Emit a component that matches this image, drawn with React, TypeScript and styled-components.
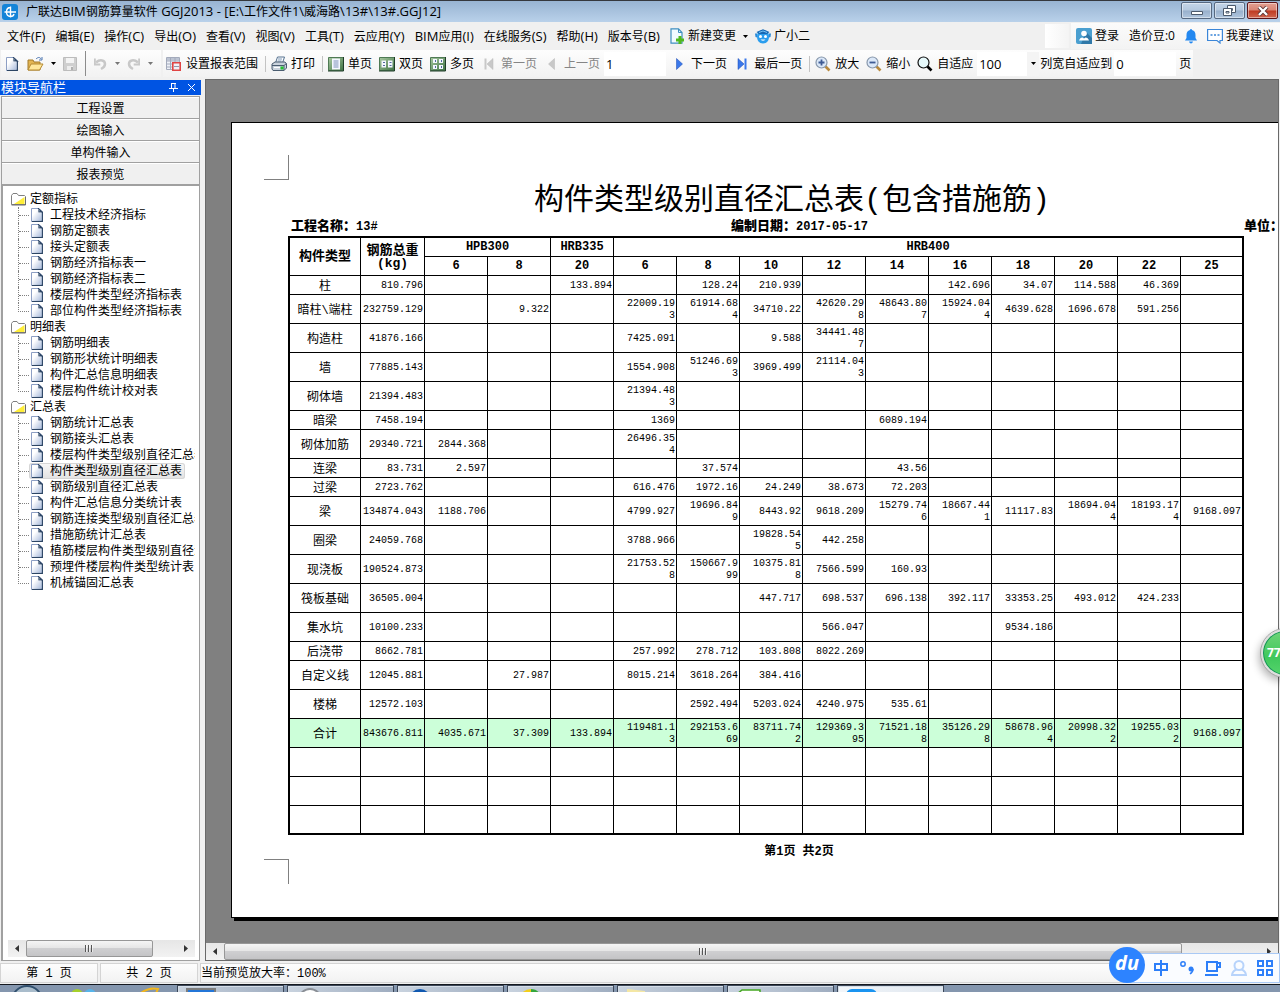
import React from "react";
import styled, { createGlobalStyle, css } from "styled-components";

const uiFont = `"Open Sans", "Noto Sans CJK SC", sans-serif`;
const monoFont = `"Liberation Mono", "Noto Sans CJK SC", monospace`;

const GlobalStyle = createGlobalStyle`
  *, *::before, *::after { box-sizing: border-box; }
  html, body { margin: 0; height: 100%; overflow: hidden; }
  body { font: 12px/16px ${uiFont}; color: #000; background: #f0f0f0; }
  button, input, select { font: inherit; color: inherit; margin: 0; padding: 0; border: 0; background: none; }
  svg { display: block; flex: none; }
`;

const Window = styled.div`
  position: relative;
  display: flex;
  flex-direction: column;
  height: 100vh;
  overflow: hidden;
  white-space: nowrap;
`;

/* Latin runs are set one size up from the Chinese text around them. */
const Latin = styled.span`
  font-size: 13px;
  white-space: pre;
`;
const Mixed = ({ text }: { text: string }) => (
  <span>
    {text.split(/([\x20-\x7e]+)/).map((part, i) => (i % 2 ? <Latin key={i}>{part}</Latin> : part))}
  </span>
);

/* ---------- title bar ---------- */

const TitleBar = styled.header`
  display: flex;
  align-items: center;
  height: 22px;
  padding: 0 2px;
  gap: 8px;
  border-top: 1px solid #35383d;
  background: linear-gradient(#98b4d2, #b9d1ea);
`;
const TitleText = styled.h1`
  flex: 1;
  margin: 0;
  font-size: 12px;
  line-height: 20px;
  font-weight: 400;
`;
const WindowButtons = styled.div`
  display: flex;
  gap: 2px;
  align-self: flex-start;
  padding-top: 1px;
`;
const WindowButton = styled.button<{ $close?: boolean }>`
  display: flex;
  align-items: center;
  justify-content: center;
  width: 31px;
  height: 17px;
  border: 1px solid ${(p) => (p.$close ? "#5c1418" : "#566880")};
  border-radius: 2px;
  box-shadow: inset 0 0 0 1px rgba(255, 255, 255, 0.45);
  background: ${(p) =>
    p.$close
      ? "linear-gradient(#e3a092 0, #d98473 48%, #bf3a22 52%, #cf6650)"
      : "linear-gradient(#c4d5e8 0, #b4c8de 48%, #98b0cc 52%, #b0c6de)"};
`;

/* ---------- menu ---------- */

const MenuBar = styled.nav`
  display: flex;
  align-items: center;
  height: 28px;
  padding-left: 2px;
  background: #f0f0f0;
`;
const MenuItem = styled.button`
  display: flex;
  align-items: center;
  gap: 3px;
  height: 24px;
  padding: 0 5px;
`;
const MenuArrow = styled.button`
  display: flex;
  padding: 0 2px;
`;
const MenuSpacer = styled.div`
  flex: 1;
`;
const EmptyBand = styled.div`
  width: 24px;
  height: 24px;
  margin-right: 2px;
  background: linear-gradient(90deg, #fff, #f4f4f4);
`;
const AccountBand = styled.div`
  display: flex;
  align-items: center;
  height: 26px;
  padding-right: 1px;
  background: linear-gradient(#fbfbfb, #f3f3f3);
`;

/* ---------- toolbar ---------- */

const ToolBar = styled.div`
  display: flex;
  align-items: center;
  height: 28px;
  gap: 2px;
  padding: 0 0 1px 1px;
`;
const ToolBand = styled.div<{ $end?: number }>`
  display: flex;
  align-items: center;
  height: 27px;
  padding-right: ${(p) => p.$end ?? 0}px;
  background: linear-gradient(#fdfdfd, #f2f2f2);
`;
const ToolButton = styled.button<{ $muted?: boolean; $split?: boolean }>`
  display: flex;
  align-items: center;
  gap: ${(p) => (p.$split ? 7 : 4)}px;
  height: 24px;
  padding: 0 4px 0 3px;
  color: ${(p) => (p.$muted ? "#858585" : "#000")};
`;
const ListButton = styled.button`
  display: flex;
  padding: 10px 4px;
`;
const Separator = styled.span<{ $tall?: boolean }>`
  width: 1px;
  height: ${(p) => (p.$tall ? 25 : 16)}px;
  margin: ${(p) => (p.$tall ? "0 5px 0 4px" : "0 2px 0 3px")};
  background: ${(p) => (p.$tall ? "#8c8c8c" : "#c3c3c3")};
`;
const Field = styled.input`
  width: 62px;
  height: 24px;
  margin-right: 2px;
  padding: 0 2px;
  font-size: 13px;
  background: #fff;
`;
const Combo = styled.span`
  display: grid;
  grid-template-columns: 50px 12px;
  align-items: center;
  height: 24px;
  background: linear-gradient(90deg, #fff 50px, #f4f4f4 50px);
  svg {
    grid-area: 1 / 2;
    justify-self: center;
    pointer-events: none;
  }
`;
const ComboSelect = styled.select`
  grid-area: 1 / 1 / 2 / 3;
  appearance: none;
  height: 24px;
  padding-left: 2px;
  font-size: 13px;
`;
const FieldLabel = styled.label`
  padding: 0 2px 0 1px;
`;

/* ---------- body ---------- */

const Body = styled.div`
  display: flex;
  flex: 1;
  min-height: 0;
  padding: 1px 0 2px;
`;
const Sidebar = styled.aside`
  display: flex;
  flex-direction: column;
  width: 201px;
  padding: 1px 0 0 0;
  margin-right: 4px;
`;
const SidebarHead = styled.div`
  display: flex;
  align-items: center;
  gap: 9px;
  height: 15px;
  padding: 0 5px 0 1px;
  background: #0054e3;
  color: #fff;
`;
const SidebarTitle = styled.h2`
  flex: 1;
  margin: 0;
  font-size: 13px;
  line-height: 15px;
  font-weight: 400;
`;
const IconButton = styled.button`
  display: flex;
`;
const SidebarFrame = styled.div`
  display: flex;
  flex-direction: column;
  flex: 1;
  min-height: 0;
  margin: 1px 1px 0;
  border: 1px solid #a0a0a0;
`;
const ModuleButton = styled.button`
  height: 22px;
  padding-top: 1px;
  line-height: 19px;
  border-top: 1px solid #fff;
  border-bottom: 1px solid #a0a0a0;
  background: #f0f0f0;
`;
const TreePanel = styled.div`
  display: flex;
  flex-direction: column;
  flex: 1;
  min-height: 0;
  padding: 5px 4px 3px 5px;
  border: 1px solid #a0a0a0;
  border-width: 1px 0 0 1px;
  background: #fff;
`;
const Tree = styled.ul`
  flex: 1;
  min-height: 0;
  margin: 0;
  padding: 0 0 0 3px;
  overflow: hidden;
  list-style: none;
`;
const FolderRow = styled.div`
  display: flex;
  align-items: center;
  gap: 4px;
  height: 16px;
`;
const Branch = styled.ul`
  margin: 0;
  padding: 0 0 0 7px;
  list-style: none;
`;
const Leaf = styled.li`
  display: flex;
  height: 16px;
  border-left: 1px dotted #808080;
  &::before {
    content: "";
    flex: none;
    width: 10px;
    height: 9px;
    border-bottom: 1px dotted #808080;
  }
  &:last-child {
    border-left: 0;
  }
  &:last-child::before {
    width: 11px;
    border-left: 1px dotted #808080;
  }
`;
const LeafLink = styled.a<{ $on?: boolean }>`
  display: flex;
  flex: none;
  align-items: center;
  gap: 7px;
  height: 16px;
  padding: 0 3px 0 2px;
  color: #000;
  text-decoration: none;
  border-radius: 3px;
  ${(p) =>
    p.$on &&
    css`
      background: linear-gradient(#f8f8f8, #e2e2e2);
      box-shadow: 0 0 0 1px #d6d6d6 inset;
    `}
`;

const ScrollTrack = styled.div`
  display: flex;
  height: 17px;
  background: linear-gradient(#e6e6e6, #f2f2f2);
`;
const ScrollArrow = styled.button`
  display: flex;
  align-items: center;
  justify-content: center;
  width: 18px;
`;
const ScrollThumb = styled.div<{ $share: number }>`
  display: flex;
  align-items: center;
  justify-content: center;
  flex: ${(p) => p.$share};
  border: 1px solid #979797;
  border-radius: 2px;
  background: linear-gradient(#f5f5f5 0, #e6e6e6 45%, #cfcfd1 50%, #c4c4c6);
`;
const ScrollRest = styled.div<{ $share: number }>`
  flex: ${(p) => p.$share};
`;

/* ---------- report preview ---------- */

const Preview = styled.main`
  display: flex;
  flex-direction: column;
  flex: 1;
  min-width: 0;
  margin-right: 1px;
  border: 1px solid #696969;
  background: #808080;
`;
const Canvas = styled.div`
  flex: 1;
  min-height: 0;
  padding: 42px 0 0 25px;
  overflow: hidden;
`;
const Paper = styled.article`
  width: 1123px;
  padding: 32px 57px 33px 32px;
  border: 1px solid #000;
  background: #fff;
  box-shadow: 3px 3px 0 #000;
  font-family: ${monoFont};
`;
const CropMark = styled.div<{ $bottom?: boolean }>`
  width: 25px;
  height: 25px;
  border-right: 1px solid #808080;
  border-bottom: ${(p) => (p.$bottom ? "0" : "1px solid #808080")};
  border-top: ${(p) => (p.$bottom ? "1px solid #808080" : "0")};
`;
const Sheet = styled.section`
  padding-left: 24px;
`;
const ReportTitle = styled.h2`
  margin: 0;
  padding-top: 6px;
  font-size: 30px;
  line-height: 30px;
  font-weight: 400;
  text-align: center;
`;
const InfoLine = styled.div`
  display: grid;
  grid-template-columns: 1fr auto 1fr;
  padding: 2px 0 0 3px;
  line-height: 18px;
`;
const BoldText = styled.span`
  font-size: 12px;
  font-weight: 700;
  b {
    font-size: 13px;
  }
`;
const InfoDate = styled(BoldText)`
  padding-left: 12px;
`;
const InfoUnit = styled(BoldText)`
  padding-right: 13px;
  text-align: right;
`;
const ReportFoot = styled.footer`
  padding: 10px 0 0 14px;
  line-height: 14px;
  text-align: center;
`;

const Table = styled.table`
  width: 956px;
  table-layout: fixed;
  border-spacing: 0;
  border: 2px solid #000;
`;
const edges = css`
  padding: 0;
  border-right: 1px solid #000;
  border-bottom: 1px solid #000;
  &:last-child {
    border-right: 0;
  }
`;
const HeadCell = styled.th<{ $cjk?: boolean }>`
  ${edges}
  font-size: ${(p) => (p.$cjk ? 13 : 12)}px;
  line-height: 13px;
  font-weight: 700;
`;
const NameCell = styled.th`
  ${edges}
  padding-top: 4px;
  font-size: 12px;
  line-height: 14px;
  font-weight: 400;
`;
const NumCell = styled.td<{ $total?: boolean }>`
  ${edges}
  padding: 2px 1px 0 ${(p) => (p.$total ? 0 : 8)}px;
  font-size: 10px;
  line-height: 12px;
  text-align: right;
  white-space: normal;
  word-break: break-all;
`;
const Row = styled.tr<{ $h: number; $sum?: boolean }>`
  height: ${(p) => p.$h}px;
  background: ${(p) => (p.$sum ? "#ccffd9" : "none")};
  &:last-child > * {
    border-bottom: 0;
  }
`;

/* ---------- status + taskbar ---------- */

const StatusBar = styled.footer`
  display: flex;
  gap: 2px;
  height: 20px;
  margin-bottom: 1px;
  font: 12px/18px ${monoFont};
`;
const StatusCell = styled.div<{ $wide?: boolean }>`
  ${(p) => (p.$wide ? "flex: 1;" : "width: 98px; text-align: center;")}
  padding-top: 2px;
  line-height: 16px;
  border: 1px solid #d4d4d4;
  background: linear-gradient(#fdfdfd, #f2f2f2);
`;
const TaskBar = styled.div`
  display: flex;
  gap: 3px;
  height: 8px;
  overflow: hidden;
  border-top: 1px solid #14181f;
  background: #8496ae;
`;
const StartArea = styled.div`
  width: 174px;
`;
const TaskButton = styled.div<{ $active?: boolean }>`
  width: 107px;
  padding-left: 8px;
  border: 1px solid #3c4758;
  border-bottom: 0;
  box-shadow: inset 1px 1px 0 #d5dee8;
  background: ${(p) =>
    p.$active
      ? "linear-gradient(100deg, #f2f6fa, #dfe6ee)"
      : "linear-gradient(100deg, #c9d3df, #9fadc0)"};
`;

/* ---------- floating widgets ---------- */

const Bubble = styled.div`
  position: absolute;
  top: 629px;
  right: -29px;
  width: 48px;
  height: 48px;
  padding-left: 4px;
  border: 2px solid #ddd;
  border-radius: 50%;
  outline: 1px solid #a8a8a8;
  box-shadow: inset 0 0 0 1px #14915a, -2px 4px 8px rgba(0, 0, 0, 0.3);
  background: linear-gradient(#6fd478, #3fc85c 60%, #56d46c);
  color: #fff;
  font-size: 12px;
  line-height: 43px;
  font-weight: 700;
`;
const Ime = styled.div`
  position: absolute;
  right: 0;
  bottom: 9px;
  display: flex;
  align-items: center;
  gap: 10px;
  width: 154px;
  height: 30px;
  padding-left: 26px;
  border: 1px solid #a9c9f5;
  background: #fafcff;
  color: #2d7ff9;
`;
const ImeLogo = styled.div`
  position: absolute;
  left: -18px;
  bottom: -1px;
  width: 36px;
  height: 36px;
  border-radius: 50%;
  background: #2d83ff;
  color: #fff;
  font: italic 700 20px/32px "Open Sans", sans-serif;
  text-align: center;
`;

/* ---------- icons ---------- */

const Caret = ({ c = "#000" }: { c?: string }) => (
  <svg width="5" height="3">
    <path d="M0 0h5L2.5 3z" fill={c} />
  </svg>
);
const PageIcon = ({ w = 12, h = 14 }: { w?: number; h?: number }) => (
  <svg width={w} height={h} viewBox="0 0 12 14">
    <defs>
      <linearGradient id="pg" x1="0" y1="0" x2="1" y2="1">
        <stop offset=".3" stopColor="#fff" />
        <stop offset="1" stopColor="#a9bbdc" />
      </linearGradient>
    </defs>
    <path d="M.5.5H8L11.5 4v9.5H.5z" fill="url(#pg)" stroke="#8d9fc4" />
    <path d="M11.3 4v9.3H1M7.500.8V4h3.600z" fill="#c5d3e6" stroke="#2c4564" strokeWidth="1.3" />
    <path d="M1 13V1h6.400v3.500H10.500V12.500z" fill="url(#pg)" />
  </svg>
);
const FolderIcon = () => (
  <svg width="15" height="13" viewBox="0 0 15 13">
    <path d="M.5 11.500V2.500L2 .5h4l1.500 2h6l1 1v8z" fill="#fff" stroke="#808080" />
    <path d="M13.500 4v7H3z" fill="#ffee38" />
    <path d="M.5 12h14V4" fill="none" stroke="#6c6c6c" />
  </svg>
);
const OpenIcon = () => (
  <svg width="17" height="16" viewBox="0 0 17 16">
    <path d="M1 14V4h5l1 2h6v8z" fill="#e3b552" stroke="#a27a2a" />
    <path d="M1 14l3-6h12l-3.500 6z" fill="#ffe79a" stroke="#b58a33" />
    <path d="M9 3c2-2 4-2 5 0m1-2v3h-3" fill="none" stroke="#4a74b0" />
  </svg>
);
const SaveIcon = () => (
  <svg width="14" height="14" viewBox="0 0 14 14">
    <path d="M.5.5h13v13h-13z" fill="#cfcfcf" stroke="#bcbcbc" />
    <path d="M3 1h8v5H3z" fill="#f4f4f4" />
    <path d="M4 9h6v4H4z" fill="#ededed" />
    <path d="M8 10h2v3H8z" fill="#b0b0b0" />
  </svg>
);
const UndoIcon = ({ flip }: { flip?: boolean }) => (
  <svg width="13" height="14" viewBox="0 0 13 14">
    <g transform={flip ? "translate(13 0) scale(-1 1)" : undefined} fill="none" stroke="#c8c8c8">
      <path d="M2 5.500C6 2 11 3 11 7c0 3-2 4-4 5" strokeWidth="2.500" />
      <path d="M.8 1.500v6h5.500" strokeWidth="2" />
    </g>
  </svg>
);
const RangeIcon = () => (
  <svg width="16" height="16" viewBox="0 0 16 16">
    <path d="M.5 1.500h13v12H.5z" fill="#eef1f8" stroke="#a3aabb" />
    <path d="M1 2h12v2.500H1z" fill="#bcc3d2" />
    <path d="M.5 5h13M.5 8h6M.5 11h6M4.500 2v11M9 2v4" fill="none" stroke="#a3aabb" />
    <path d="M6.800 6.800h7.400v7.400H6.800z" fill="#f0f0f6" stroke="#e04444" strokeWidth="1.600" />
    <path d="M8 10.500h5" stroke="#8f97ac" />
  </svg>
);
const PrintIcon = () => (
  <svg width="16" height="16" viewBox="0 0 16 16">
    <path d="M4.500 7l2-6h7l-2 6z" fill="#fff" stroke="#54718f" />
    <path d="M7 3h4M6.500 5h4" stroke="#7f9ab8" />
    <path d="M1 8l3-2h10l1.500 2v4L13 14.500H2L1 13z" fill="#c9d2dc" stroke="#4b5d70" />
    <path d="M1 9.500h12l2.500-2M13 9.500v5" fill="none" stroke="#4b5d70" />
    <path d="M3 11.500h6" stroke="#fff" />
    <path d="M9.500 10.500h3v3h-3z" fill="#23c430" />
  </svg>
);
const ViewIcon = ({ kind }: { kind: "one" | "two" | "many" }) => (
  <svg width="16" height="16" viewBox="0 0 16 16">
    <defs>
      <linearGradient id="vw" x1="0" y1="0" x2="1" y2="1">
        <stop offset="0" stopColor="#a8c8a0" />
        <stop offset="1" stopColor="#3f7344" />
      </linearGradient>
    </defs>
    <path d="M.5 1.500h15v13H.5z" fill="url(#vw)" stroke="#4f7a54" />
    <path d="M15.500 1v14H0" fill="none" stroke="#1f3d28" />
    {kind === "one" && (
      <>
        <path d="M4 2.500h8v11H4z" fill="#f4f7ff" />
        <path d="M5.500 5h5M5.500 7h5M5.500 9h5M5.500 11h5" stroke="#7d8fb8" />
      </>
    )}
    {kind === "two" && (
      <>
        <path d="M2.500 4.500H7v7H2.500zM9 4.500h4.500v7H9z" fill="#f4f7ff" />
        <path d="M4 6.500h2M4 9.500h2M10.500 6.500h2M10.500 9.500h2" stroke="#536a9c" />
      </>
    )}
    {kind === "many" && (
      <>
        <path d="M3 3h4v4H3zM9 3h4v4H9zM3 9h4v4H3zM9 9h4v4H9z" fill="#f4f7ff" />
        <path d="M5.500 4v2M11.500 4v2M5.500 10v2M11.500 10v2" stroke="#536a9c" />
      </>
    )}
  </svg>
);
const StepIcon = ({ dir, bar, off }: { dir: "l" | "r"; bar?: boolean; off?: boolean }) => {
  const c = off ? "#c8c8c8" : "#3b78ea";
  return (
    <svg width="16" height="16" viewBox="0 0 16 16">
      <g transform={dir === "l" ? "translate(16 0) scale(-1 1)" : undefined}>
        <path d={bar ? "M4 2.500v11L10 8z" : "M5.500 2.500v11L11.500 8z"} fill={c} stroke={off ? "#b8b8b8" : "#1746b0"} strokeWidth=".5" />
        {bar && <path d="M11.500 2.500v11" stroke={c} strokeWidth="2" />}
      </g>
    </svg>
  );
};
const LensIcon = ({ sign }: { sign?: "+" | "-" }) => (
  <svg width="16" height="16" viewBox="0 0 16 16">
    <path d="M10 10l4.500 4.500" stroke={sign ? "#b98a3e" : "#000"} strokeWidth="2.600" />
    <circle cx="6.500" cy="6.500" r="5.500" fill={sign ? "#dbe8f8" : "#e6f8fa"} stroke={sign ? "#8797ab" : "#111"} strokeWidth="1.200" />
    {sign && <path d={sign === "+" ? "M3.500 6.500h6M6.500 3.500v6" : "M3.500 6.500h6"} stroke="#3e5b94" strokeWidth="1.800" />}
  </svg>
);
const NewChangeIcon = () => (
  <svg width="15" height="16" viewBox="0 0 15 16">
    <path d="M1 .8h7.500L12 4.500v10.700H1z" fill="#f2faff" stroke="#3f8fc0" strokeWidth="1.200" />
    <path d="M8.500 1v3.500H12" fill="none" stroke="#3f8fc0" />
    <path d="M8.500 8h3v2.500H14v3h-2.500V16h-3v-2.500H6v-3h2.500z" fill="#4fb81e" />
  </svg>
);
const MascotIcon = () => (
  <svg width="16" height="15" viewBox="0 0 16 15">
    <path d="M0 4.500h2v4L.5 8zM16 4.500h-2v4l1.500-.5z" fill="#2a8ad8" />
    <path d="M8 1c4 0 6 2.500 6 6.500S12 14.500 8 14.500 2 11.500 2 7.500 4 1 8 1z" fill="#2b9eee" />
    <path d="M1.500 3L8 .3 14.500 3 12 5H4z" fill="#1668b4" />
    <path d="M4 3.500l4-1.500 4 1.500" fill="none" stroke="#79c4f5" />
    <circle cx="5.500" cy="7.500" r="1.500" fill="#fff" />
    <circle cx="10.500" cy="7.500" r="1.500" fill="#fff" />
    <path d="M5.500 10.500q2.500 2.500 5 0z" fill="#fff" />
  </svg>
);
const UserIcon = () => (
  <svg width="16" height="16" viewBox="0 0 16 16">
    <rect width="16" height="16" rx="2" fill="#4a9fd0" />
    <path d="M10 4l6 6v6H5z" fill="#2f78a8" />
    <circle cx="8" cy="5.500" r="2.800" fill="#fff" />
    <path d="M3 12.500q1-3 3.500-3l1.500 1 1.500-1q2.500 0 3.500 3z" fill="#fff" />
  </svg>
);
const BellIcon = () => (
  <svg width="12" height="15" viewBox="0 0 12 15">
    <path d="M6 0q1 0 1 1c2.500.6 3.500 2.500 3.500 5v3l1.500 2.500H0L1.500 9V6c0-2.500 1-4.400 3.500-5q0-1 1-1zM4 12.500h4q-.5 2-2 2t-2-2z" fill="#2388f0" />
  </svg>
);
const ChatIcon = () => (
  <svg width="16" height="16" viewBox="0 0 16 16">
    <path d="M.6 1.500h14.800v11H13V15l-3-2.500H.6z" fill="#fff" stroke="#3b86d8" strokeWidth="1.200" />
    <path d="M3.500 7h9" stroke="#3b86d8" strokeWidth="1.400" strokeDasharray="2 1.500" />
  </svg>
);
const AppIcon = () => (
  <svg width="16" height="16" viewBox="0 0 16 16">
    <rect width="16" height="16" rx="3" fill="#1384d8" />
    <path d="M8.500 2.500v11M2.500 8H14M8.500 3.500Q4.500 3.500 4.500 8t4 4.500M8.500 12.500q3 0 3.500-2.500" fill="none" stroke="#fff" strokeWidth="1.400" />
  </svg>
);
const Arrow = ({ left }: { left?: boolean }) => (
  <svg width="4" height="7">
    <path d={left ? "M4 0v7L0 3.500z" : "M0 0v7l4-3.500z"} fill="#333" />
  </svg>
);
const Grip = () => (
  <svg width="8" height="7">
    <path d="M.5 0v7M3.500 0v7M6.500 0v7" stroke="#555" />
    <path d="M1.500 0v7M4.500 0v7M7.500 0v7" stroke="#fff" opacity=".6" />
  </svg>
);

/* ---------- data ---------- */

const menus = ["文件(F)", "编辑(E)", "操作(C)", "导出(O)", "查看(V)", "视图(V)", "工具(T)", "云应用(Y)", "BIM应用(I)", "在线服务(S)", "帮助(H)", "版本号(B)"];
const modules = ["工程设置", "绘图输入", "单构件输入", "报表预览"];
const tree = [
  { name: "定额指标", items: ["工程技术经济指标", "钢筋定额表", "接头定额表", "钢筋经济指标表一", "钢筋经济指标表二", "楼层构件类型经济指标表", "部位构件类型经济指标表"] },
  { name: "明细表", items: ["钢筋明细表", "钢筋形状统计明细表", "构件汇总信息明细表", "楼层构件统计校对表"] },
  { name: "汇总表", items: ["钢筋统计汇总表", "钢筋接头汇总表", "楼层构件类型级别直径汇总表", "构件类型级别直径汇总表", "钢筋级别直径汇总表", "构件汇总信息分类统计表", "钢筋连接类型级别直径汇总表", "措施筋统计汇总表", "植筋楼层构件类型级别直径汇总表", "预埋件楼层构件类型统计表", "机械锚固汇总表"] },
];
const current = "构件类型级别直径汇总表";
const diameters = ["6", "8", "20", "6", "8", "10", "12", "14", "16", "18", "20", "22", "25"];

type Line = [string, number, string];
const lines: Line[] = [
  ["柱", 19, "810.796,,,133.894,,128.24,210.939,,,142.696,34.07,114.588,46.369,"],
  ["暗柱\\端柱", 29, "232759.129,,9.322,,22009.193,61914.684,34710.22,42620.298,48643.807,15924.044,4639.628,1696.678,591.256,"],
  ["构造柱", 29, "41876.166,,,,7425.091,,9.588,34441.487,,,,,,"],
  ["墙", 29, "77885.143,,,,1554.908,51246.693,3969.499,21114.043,,,,,,"],
  ["砌体墙", 29, "21394.483,,,,21394.483,,,,,,,,,"],
  ["暗梁", 19, "7458.194,,,,1369,,,,6089.194,,,,,"],
  ["砌体加筋", 29, "29340.721,2844.368,,,26496.354,,,,,,,,,"],
  ["连梁", 19, "83.731,2.597,,,,37.574,,,43.56,,,,,"],
  ["过梁", 19, "2723.762,,,,616.476,1972.16,24.249,38.673,72.203,,,,,"],
  ["梁", 29, "134874.043,1188.706,,,4799.927,19696.849,8443.92,9618.209,15279.746,18667.441,11117.83,18694.044,18193.174,9168.097"],
  ["圈梁", 29, "24059.768,,,,3788.966,,19828.545,442.258,,,,,,"],
  ["现浇板", 29, "190524.873,,,,21753.528,150667.999,10375.818,7566.599,160.93,,,,,"],
  ["筏板基础", 29, "36505.004,,,,,,447.717,698.537,696.138,392.117,33353.25,493.012,424.233,"],
  ["集水坑", 29, "10100.233,,,,,,,566.047,,,9534.186,,,"],
  ["后浇带", 19, "8662.781,,,,257.992,278.712,103.808,8022.269,,,,,,"],
  ["自定义线", 29, "12045.881,,27.987,,8015.214,3618.264,384.416,,,,,,,"],
  ["楼梯", 29, "12572.103,,,,,2592.494,5203.024,4240.975,535.61,,,,,"],
  ["合计", 29, "843676.811,4035.671,37.309,133.894,119481.13,292153.669,83711.742,129369.395,71521.188,35126.298,58678.964,20998.322,19255.032,9168.097"],
  ["", 29, ",,,,,,,,,,,,,"],
  ["", 29, ",,,,,,,,,,,,,"],
  ["", 27, ",,,,,,,,,,,,,"],
];

const HScroll = ({ thumb, rest }: { thumb: number; rest: number }) => (
  <ScrollTrack>
    <ScrollArrow aria-label="向左滚动"><Arrow left /></ScrollArrow>
    <ScrollThumb $share={thumb}><Grip /></ScrollThumb>
    <ScrollRest $share={rest} />
    <ScrollArrow aria-label="向右滚动"><Arrow /></ScrollArrow>
  </ScrollTrack>
);

const ReportTable = () => (
  <Table>
    <colgroup>
      <col style={{ width: 71 }} />
      <col style={{ width: 64 }} />
      {diameters.map((_, i) => (
        <col key={i} style={{ width: i === diameters.length - 1 ? 61 : 63 }} />
      ))}
    </colgroup>
    <thead>
      <tr style={{ height: 19 }}>
        <HeadCell $cjk rowSpan={2}>构件类型</HeadCell>
        <HeadCell $cjk rowSpan={2}>钢筋总重<br />(kg)</HeadCell>
        <HeadCell colSpan={2}>HPB300</HeadCell>
        <HeadCell>HRB335</HeadCell>
        <HeadCell colSpan={10}>HRB400</HeadCell>
      </tr>
      <tr style={{ height: 19 }}>
        {diameters.map((d, i) => <HeadCell key={i}>{d}</HeadCell>)}
      </tr>
    </thead>
    <tbody>
      {lines.map(([name, h, values], r) => (
        <Row key={r} $h={h} $sum={name === "合计"}>
          <NameCell scope="row">{name}</NameCell>
          {values.split(",").map((v, i) => <NumCell key={i} $total={i === 0}>{v}</NumCell>)}
        </Row>
      ))}
    </tbody>
  </Table>
);

export default function App() {
  return (
    <Window>
      <GlobalStyle />
      <TitleBar>
        <AppIcon />
        <TitleText><Mixed text={"广联达BIM钢筋算量软件 GGJ2013 - [E:\\工作文件1\\威海路\\13#\\13#.GGJ12]"} /></TitleText>
        <WindowButtons>
          <WindowButton aria-label="最小化">
            <svg width="12" height="11"><path d="M.5 6.500h11v3H.5z" fill="#fff" stroke="#4c5a6c" /></svg>
          </WindowButton>
          <WindowButton aria-label="还原">
            <svg width="13" height="12">
              <path d="M4.500.5h8v7h-8zM6.500 3.500h3v2h-3z" fill="#fff" stroke="#4c5a6c" />
              <path d="M.5 3.500h8v7h-8zM3 6.500h3v1.500H3z" fill="#fff" stroke="#4c5a6c" />
            </svg>
          </WindowButton>
          <WindowButton $close aria-label="关闭">
            <svg width="12" height="10">
              <path d="M2 1l8 8M10 1L2 9" stroke="#5a3434" strokeWidth="4" />
              <path d="M2 1l8 8M10 1L2 9" stroke="#fff" strokeWidth="2.400" />
            </svg>
          </WindowButton>
        </WindowButtons>
      </TitleBar>

      <MenuBar>
        {menus.map((m) => <MenuItem key={m}><Mixed text={m} /></MenuItem>)}
        <MenuItem><NewChangeIcon />新建变更</MenuItem>
        <MenuArrow aria-label="新建变更列表"><Caret /></MenuArrow>
        <MenuItem><MascotIcon />广小二</MenuItem>
        <MenuSpacer />
        <EmptyBand />
        <AccountBand>
          <MenuItem><UserIcon />登录</MenuItem>
          <MenuItem>造价豆:0</MenuItem>
          <MenuItem aria-label="消息"><BellIcon /></MenuItem>
          <MenuItem><ChatIcon />我要建议</MenuItem>
        </AccountBand>
      </MenuBar>

      <ToolBar>
        <ToolBand $end={4}>
          <ToolButton aria-label="新建"><PageIcon w={16} /></ToolButton>
          <ToolButton $split aria-label="打开"><OpenIcon /><Caret /></ToolButton>
          <ToolButton aria-label="保存"><SaveIcon /></ToolButton>
          <Separator $tall />
          <ToolButton aria-label="撤销"><UndoIcon /></ToolButton>
          <ListButton aria-label="撤销列表"><Caret c="#777" /></ListButton>
          <ToolButton aria-label="恢复"><UndoIcon flip /></ToolButton>
          <ListButton aria-label="恢复列表"><Caret c="#777" /></ListButton>
        </ToolBand>
        <ToolBand>
          <ToolButton><RangeIcon />设置报表范围</ToolButton>
          <Separator />
          <ToolButton><PrintIcon />打印</ToolButton>
          <Separator />
          <ToolButton><ViewIcon kind="one" />单页</ToolButton>
          <ToolButton><ViewIcon kind="two" />双页</ToolButton>
          <ToolButton><ViewIcon kind="many" />多页</ToolButton>
          <ToolButton $muted><StepIcon dir="l" bar off />第一页</ToolButton>
          <ToolButton $muted><StepIcon dir="l" off />上一页</ToolButton>
          <Field aria-label="页码" defaultValue="1" />
          <ToolButton><StepIcon dir="r" />下一页</ToolButton>
          <ToolButton><StepIcon dir="r" bar />最后一页</ToolButton>
          <Separator />
          <ToolButton><LensIcon sign="+" />放大</ToolButton>
          <ToolButton><LensIcon sign="-" />缩小</ToolButton>
          <ToolButton><LensIcon />自适应</ToolButton>
          <Combo>
            <ComboSelect aria-label="显示比例" defaultValue="100"><option>100</option></ComboSelect>
            <Caret />
          </Combo>
          <FieldLabel htmlFor="fit">列宽自适应到</FieldLabel>
          <Field id="fit" defaultValue="0" />
          <FieldLabel htmlFor="fit">页</FieldLabel>
        </ToolBand>
      </ToolBar>

      <Body>
        <Sidebar>
          <SidebarHead>
            <SidebarTitle>模块导航栏</SidebarTitle>
            <IconButton aria-label="固定">
              <svg width="9" height="9"><path d="M2.500 0v5M2 .5h5M6 0v5M0 5.500h9M4.500 6v3" stroke="#fff" fill="none" /></svg>
            </IconButton>
            <IconButton aria-label="关闭导航栏">
              <svg width="9" height="9"><path d="M1 1l7 7M8 1L1 8" stroke="#fff" /></svg>
            </IconButton>
          </SidebarHead>
          <SidebarFrame>
            {modules.map((m) => <ModuleButton key={m}>{m}</ModuleButton>)}
            <TreePanel>
              <Tree>
                {tree.map((group) => (
                  <li key={group.name}>
                    <FolderRow><FolderIcon />{group.name}</FolderRow>
                    <Branch>
                      {group.items.map((item) => (
                        <Leaf key={item}>
                          <LeafLink href="#" $on={item === current}><PageIcon />{item}</LeafLink>
                        </Leaf>
                      ))}
                    </Branch>
                  </li>
                ))}
              </Tree>
              <HScroll thumb={127} rest={25} />
            </TreePanel>
          </SidebarFrame>
        </Sidebar>

        <Preview>
          <Canvas>
            <Paper>
              <CropMark />
              <Sheet>
                <ReportTitle>构件类型级别直径汇总表(包含措施筋)</ReportTitle>
                <InfoLine>
                  <BoldText><b>工程名称：</b>13#</BoldText>
                  <InfoDate><b>编制日期：</b>2017-05-17</InfoDate>
                  <InfoUnit><b>单位：</b></InfoUnit>
                </InfoLine>
                <ReportTable />
                <ReportFoot><BoldText>第1页 共2页</BoldText></ReportFoot>
              </Sheet>
              <CropMark $bottom />
            </Paper>
          </Canvas>
          <HScroll thumb={958} rest={78} />
        </Preview>
      </Body>

      <StatusBar>
        <StatusCell>第 1 页</StatusCell>
        <StatusCell>共 2 页</StatusCell>
        <StatusCell $wide>当前预览放大率：100%</StatusCell>
      </StatusBar>
      <TaskBar>
        <StartArea>
          <svg width="174" height="8">
            <circle cx="27" cy="16" r="15" fill="#a9bccb" stroke="#31506e" strokeWidth="2" />
            <circle cx="77" cy="10" r="6" fill="#a6d02a" />
            <circle cx="90" cy="10" r="6" fill="#56b4ea" />
            <path d="M141 8q8-6 17-4l-2 4" fill="none" stroke="#f2b61c" strokeWidth="2" />
          </svg>
        </StartArea>
        <TaskButton><svg width="30" height="8"><path d="M1 8V3h28v5" fill="#2376d8" stroke="#7d7d7d" strokeWidth="2" /></svg></TaskButton>
        <TaskButton><svg width="30" height="8"><circle cx="14" cy="14" r="11" fill="#fff" stroke="#8a8f96" strokeWidth="2" /></svg></TaskButton>
        <TaskButton><svg width="30" height="8"><circle cx="14" cy="14" r="11" fill="#0f58b0" /></svg></TaskButton>
        <TaskButton><svg width="30" height="8"><path d="M5 8q4-5 10-5v5" fill="#f2ce1b" /><path d="M15 8V3q6 0 9 5" fill="#35a63c" /></svg></TaskButton>
        <TaskButton><svg width="30" height="8"><path d="M1 8V3l18 2v3" fill="#f4e7a4" /></svg></TaskButton>
        <TaskButton><svg width="30" height="8"><path d="M1 8l5-4h18v4" fill="#fff" stroke="#45a822" strokeWidth="1.500" /></svg></TaskButton>
        <TaskButton $active><svg width="32" height="8"><rect y="3" width="31" height="12" rx="6" fill="#1a94f0" /></svg></TaskButton>
      </TaskBar>

      <Bubble>77</Bubble>
      <Ime>
        <ImeLogo>du</ImeLogo>
        <svg width="16" height="16" fill="none" stroke="currentColor" strokeWidth="2">
          <path d="M2 4h12v6H2zM8 0v16" />
        </svg>
        <svg width="16" height="16">
          <circle cx="4" cy="4" r="2.200" fill="none" stroke="currentColor" strokeWidth="1.500" />
          <circle cx="12" cy="9" r="2.500" fill="currentColor" />
          <path d="M14 9q0 3-3 5" fill="none" stroke="currentColor" strokeWidth="1.500" />
        </svg>
        <svg width="16" height="16" fill="none" stroke="currentColor" strokeWidth="2">
          <path d="M2 2h10v9H2zM12 3h3v4h-3M0 15h13" />
        </svg>
        <svg width="16" height="16" fill="none" stroke="#b7d3fb" strokeWidth="2">
          <circle cx="8" cy="5.500" r="4.500" />
          <path d="M5.500 9.500Q1.500 11 1 15h14q-.5-4-4.500-5.500" />
        </svg>
        <svg width="16" height="16" fill="none" stroke="currentColor" strokeWidth="2">
          <path d="M1 1h5v5H1zM10 1h5v5h-5zM1 10h5v5H1zM10 10h5v5h-5z" />
        </svg>
      </Ime>
    </Window>
  );
}
